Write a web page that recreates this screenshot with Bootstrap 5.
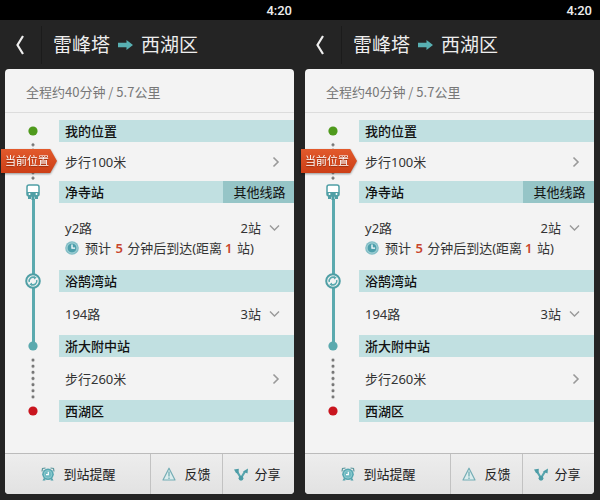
<!DOCTYPE html>
<html lang="zh-CN">
<head>
<meta charset="utf-8">
<meta name="viewport" content="width=device-width, initial-scale=1">
<title>雷峰塔 → 西湖区</title>
<link href="https://cdn.jsdelivr.net/npm/bootstrap@5.3.0/dist/css/bootstrap.min.css" rel="stylesheet">
<style>
  body { background: #242424; color: #333; font: 13px/20px "Noto Sans", "Noto Sans CJK SC", sans-serif; }
  .status { background: #000; color: #eee; height: 20px; padding: 3px 8px 0; font-family: Roboto, sans-serif; font-weight: 500; }
  .topbar { height: 49px; color: #eee; background: #242424; }
  .topbar h1 { font-size: 19px; line-height: 28px; font-weight: 400; gap: 8px; padding-left: 11px; }
  .back { width: 42px; height: 38px; padding: 0 0 0 15px; border: 0; border-right: 1px solid #1b1b1b; background: none; text-align: left; }
  .sheet { margin: 0 6px 7px 5px; background: #f3f3f3; border-radius: 4px; }
  .summary { color: #777; padding: 13px 21px 10px; border-bottom: 1px solid #dcdcdc; margin-bottom: 7px; font-family: "Noto Sans CJK SC", sans-serif; }
  .rail { flex: 0 0 54px; padding-right: 0; }
  .rail svg { margin-left: 2px; }
  .stop { min-height: 22px; }
  .stop-name { background: #c1e0e1; color: #111; line-height: 22px; font-weight: 500; font-size: 13px; padding-left: 6px; }
  .other { width: 71px; border: 0; background: #96c5c7; color: #111; padding: 0 0 0 2px; line-height: 22px; }
  .leg-body { padding: 0 14px 0 6px; }
  .walk { min-height: 39px; }
  .ride { min-height: 43px; }
  .walk-last { min-height: 43px; }
  .ride-long { min-height: 67px; padding: 7px 0 4px; }
  .chevron-link, .chevron-link:hover { color: inherit; text-decoration: none; }
  .expand { border: 0; background: none; padding: 0; color: inherit; gap: 8px; }
  .dotted { background: radial-gradient(circle, #777 0 1px, transparent 2px) 26px 0 / 4px 6px no-repeat round; }
  .line { background: linear-gradient(#5aa9ae, #5aa9ae) 27px 0 / 3px 100% no-repeat; }
  .line-end { background-size: 3px 50%; }
  .line-start { background-size: 3px 20%; background-position: 27px 100%; }
  .here-wrap { left: -4px; top: 7px; filter: drop-shadow(0 1px 1px #0006); }
  .here { width: 56px; height: 24px; color: #fff; font-size: 11px; line-height: 23px; padding-left: 4px; text-shadow: 0 1px 1px #8f2b0c; background: linear-gradient(#e25a2c, #cc3e16); clip-path: polygon(0 0, 88% 0, 100% 50%, 88% 100%, 0 100%); }
  .eta b { color: #c8452b; font-weight: 600; margin: 0 1px; }
  .eta b + b { margin-left: 3px; }
  .eta { gap: 6px; }
  .actions { margin-top: 31px; border-top: 1px solid #bbb; background: linear-gradient(#ededed, #e2e2e2); border-radius: 0 0 4px 4px; }
  .actions button { height: 40px; border: 0; background: none; color: #222; padding: 0; gap: 8px; }
  .actions button + button { border-left: 1px solid #c2c2c2; flex: 0 0 72px; }
  .actions .remind { padding-left: 2px; }
  .actions .share { gap: 6px; padding-right: 2px; }
</style>
</head>
<body>
<svg class="d-none" aria-hidden="true">
  <symbol id="i-back" viewBox="0 0 10 20"><path d="M8 1 2.500 10 8 19" fill="none" stroke="#eee" stroke-width="2.200"/></symbol>
  <symbol id="i-arrow" viewBox="0 0 15 10"><path d="M0 2.800h8.500V0L15 5l-6.500 5V7.200H0z" fill="#58b0b2"/></symbol>
  <symbol id="i-right" viewBox="0 0 8 12"><path d="m1.500 1.500 4.500 4.500-4.500 4.500" fill="none" stroke="#999" stroke-width="1.600"/></symbol>
  <symbol id="i-down" viewBox="0 0 11 8"><path d="m1 1.500 4.500 4.500L10 1.500" fill="none" stroke="#999" stroke-width="1.400"/></symbol>
  <symbol id="i-bus" viewBox="0 0 14 16"><rect x="1" y="1" width="12" height="11" rx="2" fill="#fff" stroke="#4f9fa5" stroke-width="1.500"/><path d="M1 8h12v4H1z" fill="#4f9fa5"/><path d="M2 12h3v3H2zM9 12h3v3H9zM5.500 12h3v4h-3z" fill="#4f9fa5"/><circle cx="3.500" cy="10" r="1" fill="#fff"/><circle cx="10.500" cy="10" r="1" fill="#fff"/></symbol>
  <symbol id="i-transfer" viewBox="0 0 16 16"><circle cx="8" cy="8" r="6.800" fill="#f3f3f3" stroke="#4f9fa5" stroke-width="2"/><path d="M4.300 9A3.800 3.800 0 0 1 9.500 4.500M11.700 7A3.800 3.800 0 0 1 6.500 11.500" fill="none" stroke="#5aa9ae" stroke-width="1.500"/><path d="m8.500 2.700 3.200 1.800-2.500 2zM7.500 13.300l-3.200-1.800 2.500-2z" fill="#5aa9ae"/></symbol>
  <symbol id="i-clock" viewBox="0 0 15 15"><circle cx="7.500" cy="7.500" r="7.300" fill="#83bec6"/><circle cx="7.500" cy="7.500" r="5.300" fill="#4d9fab" stroke="#b9dfe2" stroke-width=".8"/><path d="M7.500 3.700v4h3.300" fill="none" stroke="#fff" stroke-width="1.400"/></symbol>
  <symbol id="i-alarm" viewBox="0 0 14 14"><path d="M1 4.500 1.500 1.500 4.500 1M13 4.500l-.5-3L9.500 1" fill="none" stroke="#5d979d" stroke-width="1.200"/><path d="m3 11-1.500 2.500h3zM11 11l1.500 2.500h-3z" fill="#4f9fa9"/><circle cx="7" cy="7.300" r="5.800" fill="#55a7b1"/><circle cx="7" cy="7.300" r="3.900" fill="#6fbac2" stroke="#a5d5d9" stroke-width=".6"/><path d="M7.300 4.700v3H5" fill="none" stroke="#fff" stroke-width="1.200"/></symbol>
  <symbol id="i-warn" viewBox="0 0 14 14"><path d="M7 1.200 13 13H1z" fill="#dceced" stroke="#75adb5" stroke-width="1.200" stroke-linejoin="round"/><path d="M7 4.500v5M7 10.500V12" stroke="#66a9b0" stroke-width="1.200"/></symbol>
  <symbol id="i-share" viewBox="0 0 14 13"><path d="M3 3.500 7 10l4-6.500" fill="none" stroke="#57a5ae" stroke-width="2.200"/><circle cx="7" cy="10.300" r="2.400" fill="#4d9ca6"/><path d="M0 1.500 4.800.8 4.500 5.500 2 5zM14 .5l-.5 5L9 3.500z" fill="#4d9ca6"/></symbol>
  <symbol id="i-dot" viewBox="0 0 10 10"><circle cx="5" cy="5" r="4.600" fill="currentColor"/></symbol>
</svg>

<div class="row g-0" id="screens">
  <section class="col-6">
    <div class="status text-end lh-sm">4:20</div>
    <header class="topbar d-flex align-items-center">
      <button class="back d-flex align-items-center" type="button" aria-label="返回"><svg width="10" height="20"><use href="#i-back"/></svg></button>
      <h1 class="d-flex align-items-center mb-0"><span>雷峰塔</span><svg width="15" height="10"><use href="#i-arrow"/></svg><span>西湖区</span></h1>
    </header>
    <main class="sheet">
      <div class="summary">全程约40分钟 / 5.7公里</div>

      <div class="stop d-flex">
        <div class="rail d-flex align-items-center justify-content-center" style="color:#4f9a1c"><svg width="10" height="10"><use href="#i-dot"/></svg></div>
        <h2 class="stop-name flex-fill mb-0">我的位置</h2>
      </div>
      <div class="walk d-flex position-relative">
        <div class="rail dotted"></div>
        <a href="#" class="chevron-link leg-body flex-fill d-flex align-items-center justify-content-between"><span>步行100米</span><svg width="8" height="12"><use href="#i-right"/></svg></a>
        <div class="here-wrap position-absolute"><div class="here text-nowrap">当前位置</div></div>
      </div>

      <div class="stop d-flex">
        <div class="rail line line-start d-flex align-items-center justify-content-center"><svg width="14" height="16"><use href="#i-bus"/></svg></div>
        <h2 class="stop-name flex-fill mb-0">净寺站</h2>
        <button class="other" type="button">其他线路</button>
      </div>
      <div class="d-flex">
        <div class="rail line"></div>
        <div class="ride-long flex-fill d-flex flex-column justify-content-center">
          <div class="leg-body d-flex justify-content-between"><span>y2路</span><button class="expand d-flex align-items-center" type="button">2站<svg width="11" height="8"><use href="#i-down"/></svg></button></div>
          <div class="leg-body eta d-flex align-items-center text-nowrap"><svg width="14" height="14"><use href="#i-clock"/></svg><span>预计 <b>5</b> 分钟后到达(距离<b>1</b> 站)</span></div>
        </div>
      </div>

      <div class="stop d-flex">
        <div class="rail line d-flex align-items-center justify-content-center"><svg width="16" height="16"><use href="#i-transfer"/></svg></div>
        <h2 class="stop-name flex-fill mb-0">浴鹄湾站</h2>
      </div>
      <div class="ride d-flex">
        <div class="rail line"></div>
        <div class="leg-body flex-fill d-flex align-items-center justify-content-between"><span>194路</span><button class="expand d-flex align-items-center" type="button">3站<svg width="11" height="8"><use href="#i-down"/></svg></button></div>
      </div>

      <div class="stop d-flex">
        <div class="rail line line-end d-flex align-items-center justify-content-center" style="color:#5aa9ae"><svg width="10" height="10"><use href="#i-dot"/></svg></div>
        <h2 class="stop-name flex-fill mb-0">浙大附中站</h2>
      </div>
      <div class="walk-last d-flex">
        <div class="rail dotted"></div>
        <a href="#" class="chevron-link leg-body flex-fill d-flex align-items-center justify-content-between"><span>步行260米</span><svg width="8" height="12"><use href="#i-right"/></svg></a>
      </div>

      <div class="stop d-flex">
        <div class="rail d-flex align-items-center justify-content-center" style="color:#c9151e"><svg width="10" height="10"><use href="#i-dot"/></svg></div>
        <h2 class="stop-name flex-fill mb-0">西湖区</h2>
      </div>

      <footer class="actions d-flex">
        <button class="remind flex-fill d-flex align-items-center justify-content-center" type="button"><svg width="14" height="14"><use href="#i-alarm"/></svg>到站提醒</button>
        <button class="d-flex align-items-center justify-content-center" type="button"><svg width="14" height="14"><use href="#i-warn"/></svg>反馈</button>
        <button class="share d-flex align-items-center justify-content-center" type="button"><svg width="14" height="13"><use href="#i-share"/></svg>分享</button>
      </footer>
    </main>
  </section>
</div>
<script src="https://cdn.jsdelivr.net/npm/bootstrap@5.3.0/dist/js/bootstrap.bundle.min.js"></script>
<script>
  // Both screens show the same route.
  const screens = document.getElementById('screens');
  screens.append(screens.firstElementChild.cloneNode(true));
</script>
</body>
</html>
